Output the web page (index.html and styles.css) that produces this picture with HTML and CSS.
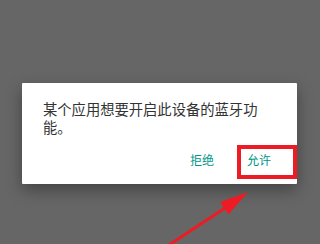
FILE: index.html
```html
<!DOCTYPE html>
<html lang="zh">
<head>
<meta charset="utf-8">
<link rel="stylesheet" href="styles.css">
</head>
<body>
<div class="screen">
  <div class="dialog">
    <p class="message">某个应用想要开启此设备的蓝牙功能。</p>
    <div class="actions">
      <span class="btn">拒绝</span>
      <span class="btn">允许</span>
    </div>
  </div>
  <div class="highlight"></div>
  <svg class="arrow" width="320" height="244" viewBox="0 0 320 244">
    <line x1="166" y1="247" x2="228" y2="206" stroke="#ed1c24" stroke-width="3"/>
    <polygon points="248,192 220,202 228.5,214.5" fill="#ed1c24"/>
  </svg>
</div>
</body>
</html>
```
FILE: styles.css
```css
html, body {
  margin: 0;
  padding: 0;
  background: #666666;
}
.screen {
  position: relative;
  width: 320px;
  height: 244px;
  overflow: hidden;
  padding-top: 83px;
  box-sizing: border-box;
  font-family: "Noto Sans CJK SC", "Noto Sans", sans-serif;
}
.dialog {
  margin-left: 22px;
  width: 275px;
  height: 101px;
  background: #ffffff;
  border-radius: 1px;
  box-shadow: 0 6px 16px rgba(0, 0, 0, 0.35);
  display: flex;
  flex-direction: column;
  box-sizing: border-box;
  padding: 17px 0 8px 0;
}
.message {
  margin: 0;
  padding: 0 21px;
  font-size: 14.3px;
  line-height: 18px;
  color: #333333;
}
.actions {
  margin-top: 8px;
  display: flex;
  justify-content: flex-end;
  gap: 17px;
  padding-right: 18px;
}
.btn {
  padding: 0 8px;
  height: 32px;
  line-height: 32px;
  font-size: 12px;
  color: #009688;
}
.highlight {
  position: absolute;
  left: 237px;
  top: 145px;
  width: 60px;
  height: 34px;
  box-sizing: border-box;
  border: 4px solid #ed1c24;
}
.arrow {
  position: absolute;
  left: 0;
  top: 0;
}
```
